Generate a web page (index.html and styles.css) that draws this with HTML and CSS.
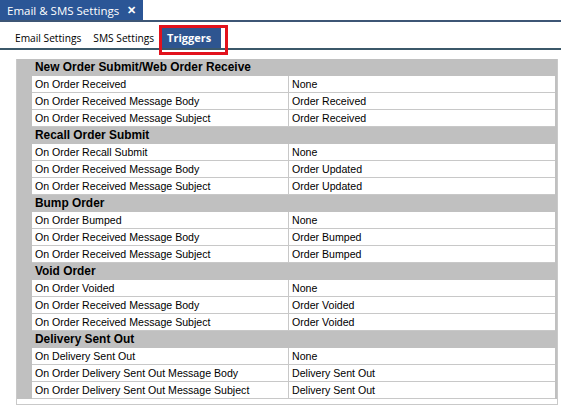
FILE: index.html
```html
<!DOCTYPE html>
<html>
<head>
<meta charset="utf-8">
<link rel="stylesheet" href="styles.css">
</head>
<body>
<div class="doc-tabs">
  <div class="doc-tab"><span>Email &amp; SMS Settings</span><span class="close">&#x2715;</span></div>
</div>
<div class="sub-tabs">
  <div class="sub-tab email">Email Settings</div>
  <div class="sub-tab sms">SMS Settings</div>
  <div class="sub-tab active">Triggers</div>
</div>
<div class="grid">
  <div class="group">New Order Submit/Web Order Receive</div>
  <div class="row"><div class="gut"></div><div class="c1">On Order Received</div><div class="c2">None</div></div>
  <div class="row"><div class="gut"></div><div class="c1">On Order Received Message Body</div><div class="c2">Order Received</div></div>
  <div class="row"><div class="gut"></div><div class="c1">On Order Received Message Subject</div><div class="c2">Order Received</div></div>
  <div class="group">Recall Order Submit</div>
  <div class="row"><div class="gut"></div><div class="c1">On Order Recall Submit</div><div class="c2">None</div></div>
  <div class="row"><div class="gut"></div><div class="c1">On Order Received Message Body</div><div class="c2">Order Updated</div></div>
  <div class="row"><div class="gut"></div><div class="c1">On Order Received Message Subject</div><div class="c2">Order Updated</div></div>
  <div class="group">Bump Order</div>
  <div class="row"><div class="gut"></div><div class="c1">On Order Bumped</div><div class="c2">None</div></div>
  <div class="row"><div class="gut"></div><div class="c1">On Order Received Message Body</div><div class="c2">Order Bumped</div></div>
  <div class="row"><div class="gut"></div><div class="c1">On Order Received Message Subject</div><div class="c2">Order Bumped</div></div>
  <div class="group">Void Order</div>
  <div class="row"><div class="gut"></div><div class="c1">On Order Voided</div><div class="c2">None</div></div>
  <div class="row"><div class="gut"></div><div class="c1">On Order Received Message Body</div><div class="c2">Order Voided</div></div>
  <div class="row"><div class="gut"></div><div class="c1">On Order Received Message Subject</div><div class="c2">Order Voided</div></div>
  <div class="group">Delivery Sent Out</div>
  <div class="row"><div class="gut"></div><div class="c1">On Delivery Sent Out</div><div class="c2">None</div></div>
  <div class="row"><div class="gut"></div><div class="c1">On Order Delivery Sent Out Message Body</div><div class="c2">Delivery Sent Out</div></div>
  <div class="row"><div class="gut"></div><div class="c1">On Order Delivery Sent Out Message Subject</div><div class="c2">Delivery Sent Out</div></div>
</div>
</body>
</html>
```
FILE: styles.css
```css
* { box-sizing: border-box; }
body {
  margin: 0;
  background: #ffffff;
  font-family: "Liberation Sans", Arial, sans-serif;
  color: #000;
  width: 561px;
  height: 406px;
  overflow: hidden;
}
.doc-tabs {
  height: 22px;
  border-bottom: 2px solid #3d5675;
  display: flex;
}
.doc-tab {
  background: #2b5696;
  color: #fff;
  height: 20px;
  width: 143px;
  display: flex;
  align-items: center;
  padding-left: 7px;
  font-family: "Open Sans", sans-serif;
  font-size: 11.5px;
  gap: 8px;
}
.doc-tab .close {
  font-size: 10.5px;
  font-weight: bold;
}
.sub-tabs {
  height: 28px;
  border-bottom: 2px solid #3b5869;
  display: flex;
  align-items: flex-end;
  padding-left: 15px;
}
.sub-tab {
  font-family: "Open Sans", sans-serif;
  font-size: 10.2px;
  height: 21px;
  line-height: 22px;
  position: relative;
}
.sub-tab.email { margin-right: 12px; }
.sub-tab.sms { margin-right: 8px; }
.sub-tab.active {
  background: #2e5590;
  color: #fff;
  font-weight: bold;
  font-size: 11px;
  padding: 0 5px;
  width: 59px;
}
.sub-tab.active::after {
  content: "";
  position: absolute;
  left: -3px;
  top: -2px;
  right: -7px;
  bottom: -7px;
  border: 3px solid #e2121c;
}
.grid {
  margin: 9px 3px 0 16px;
  border: 1px solid #c9c9c9;
  border-top: 0;
  background: #c0c0c0;
  padding-right: 2px;
  font-size: 10.6px;
}
.group {
  height: 17px;
  line-height: 17px;
  padding-left: 18px;
  font-weight: bold;
  font-size: 11.9px;
  background: #c0c0c0;
}
.row {
  display: flex;
  height: 17px;
  line-height: 16px;
  background: #fff;
}
.gut {
  width: 15px;
  background: #c0c0c0;
  flex: none;
}
.c1 {
  width: 257px;
  flex: none;
  border-right: 1px solid #c8c8c8;
  border-bottom: 1px solid #c8c8c8;
  padding-left: 3px;
  white-space: nowrap;
}
.c2 {
  flex: 1;
  border-bottom: 1px solid #c8c8c8;
  padding-left: 3px;
  white-space: nowrap;
}
.grid::after {
  content: "";
  display: block;
  height: 5px;
  background: #fff;
  margin-right: -2px;
}
```
